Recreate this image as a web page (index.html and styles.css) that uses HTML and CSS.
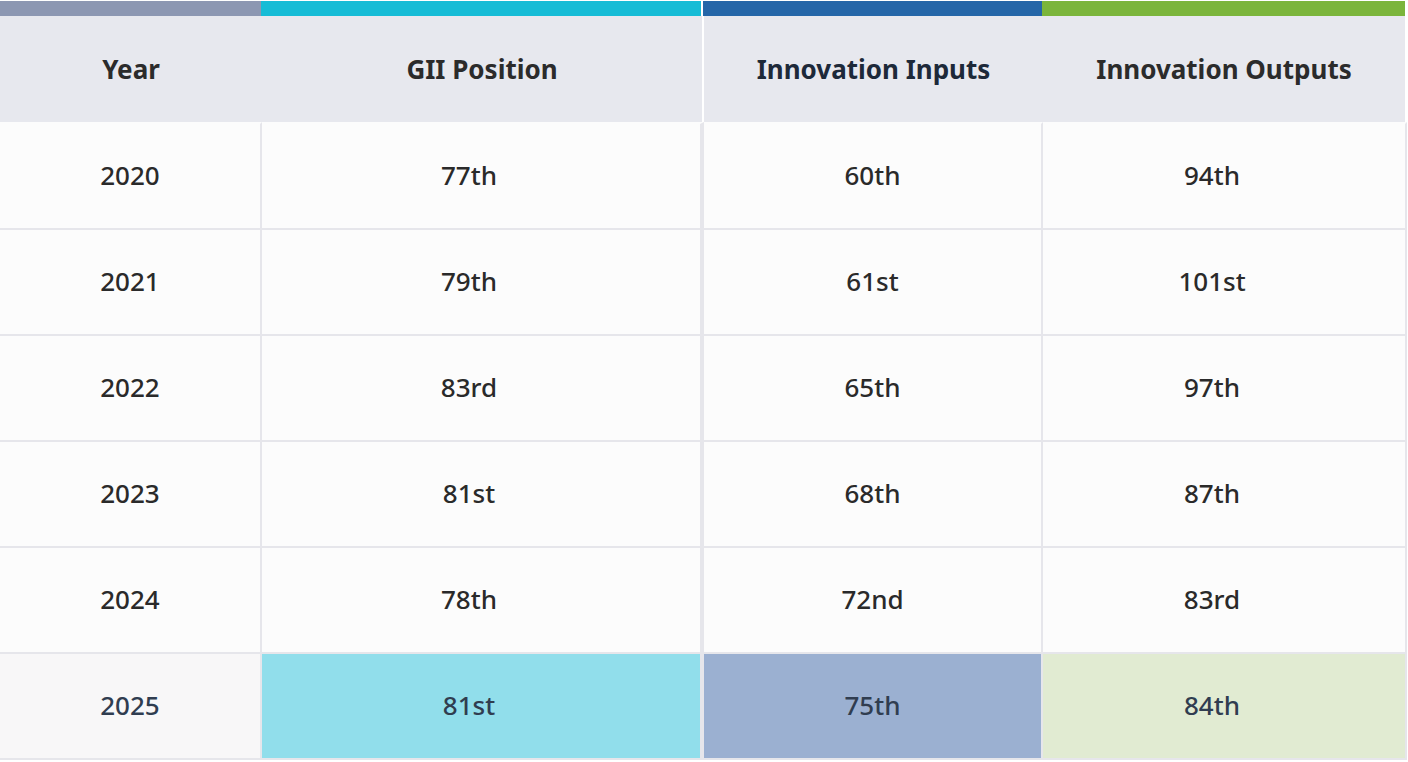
FILE: index.html
```html
<!DOCTYPE html>
<html lang="en">
<head>
<meta charset="utf-8">
<title>GII ranking</title>
<link rel="stylesheet" href="styles.css">
</head>
<body>
<div class="wrap">
  <div class="bars">
    <div class="bar bar-year"></div>
    <div class="bar bar-gii"></div>
    <div class="bar bar-in"></div>
    <div class="bar bar-out"></div>
  </div>
  <table class="rank">
    <colgroup>
      <col class="c-year"><col class="c-gii"><col class="c-in"><col class="c-out">
    </colgroup>
    <thead>
      <tr>
        <th class="h-year">Year</th>
        <th class="h-gii">GII Position</th>
        <th class="h-in">Innovation Inputs</th>
        <th class="h-out">Innovation Outputs</th>
      </tr>
    </thead>
    <tbody>
      <tr class="first"><td class="year">2020</td><td class="gii">77th</td><td class="in">60th</td><td class="out">94th</td></tr>
      <tr><td class="year">2021</td><td class="gii">79th</td><td class="in">61st</td><td class="out">101st</td></tr>
      <tr><td class="year">2022</td><td class="gii">83rd</td><td class="in">65th</td><td class="out">97th</td></tr>
      <tr><td class="year">2023</td><td class="gii">81st</td><td class="in">68th</td><td class="out">87th</td></tr>
      <tr><td class="year">2024</td><td class="gii">78th</td><td class="in">72nd</td><td class="out">83rd</td></tr>
      <tr class="current"><td class="year">2025</td><td class="gii">81st</td><td class="in">75th</td><td class="out">84th</td></tr>
    </tbody>
  </table>
</div>
</body>
</html>
```

FILE: styles.css
```css
html, body {
  margin: 0;
  padding: 0;
  background: #ffffff;
}
body {
  font-family: "Noto Sans", "Open Sans", sans-serif;
  padding-top: 1px;
}
.wrap {
  width: 1407px;
}
.bars {
  display: flex;
  height: 15px;
}
.bar { height: 100%; }
.bar-year { width: 261px; background: #8c97b2; }
.bar-gii { width: 440px; background: #16bcd6; margin-right: 2px; }
.bar-in { width: 339px; background: #2566a8; }
.bar-out { width: 363px; background: #7bb53b; }

.rank {
  border-collapse: separate;
  border-spacing: 0;
  table-layout: fixed;
  width: 1407px;
}
.c-year { width: 262px; }
.c-gii { width: 442px; }
.c-in { width: 339px; }
.c-out { width: 364px; }

.rank th {
  background: #e7e8ee;
  height: 106px;
  padding: 0;
  font-size: 26px;
  font-weight: 700;
  color: #2b2b2b;
  text-align: center;
  vertical-align: middle;
}
.rank th.h-gii { border-right: 2px solid #ffffff; }
.rank th.h-in { color: #1d2939; }
.rank th.h-out { border-right: 2px solid #ffffff; }

.rank td {
  background: #fcfcfc;
  height: 102px;
  padding: 0 0 2px 0;
  font-size: 26px;
  font-weight: 500;
  color: #2a2a2a;
  text-align: center;
  vertical-align: middle;
  border-bottom: 2px solid #e6e6eb;
  border-right: 2px solid #e6e6eb;
}
.rank td.gii { border-right-width: 4px; padding-right: 24px; }
.rank td.out { padding-right: 24px; }
.rank tr.first td { border-top: 2px solid #fcfcfc; }

.rank tr.current td { color: #303d50; }
.rank tr.current td.year { background: #f8f7f8; }
.rank tr.current td.gii { background: #91deeb; }
.rank tr.current td.in { background: #9bb0d1; }
.rank tr.current td.out { background: #e1ebd2; }
```
